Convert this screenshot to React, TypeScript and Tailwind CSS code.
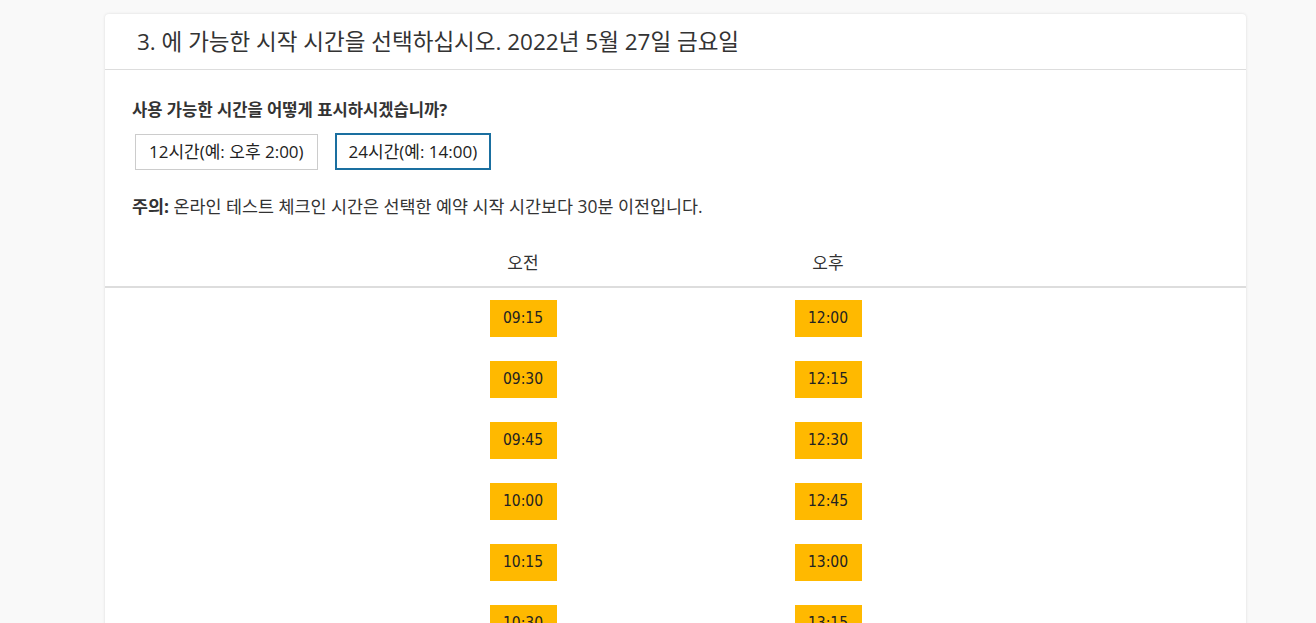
const am = ["09:15", "09:30", "09:45", "10:00", "10:15", "10:30"];
const pm = ["12:00", "12:15", "12:30", "12:45", "13:00", "13:15"];

const font = "font-['Segoe_UI','Open_Sans','Noto_Sans_CJK_KR',sans-serif]";

function Slot({ time }: { time: string }) {
  return (
    <div className="flex h-[61px] items-start justify-center pt-[12px]">
      <button className="h-[37px] w-[67px] bg-[#ffb900] font-['DejaVu_Sans_Condensed','Liberation_Sans',sans-serif] text-[15.5px] text-[#222]">
        {time}
      </button>
    </div>
  );
}

export default function App() {
  return (
    <div className={`min-h-screen bg-[#f9f9f9] pt-[14px] text-[#333] ${font}`}>
      <div className="ml-[105px] w-[1141px] overflow-hidden rounded-[4px] bg-white shadow-[0_0_3px_rgba(0,0,0,0.12)]">
        <div className="flex h-[56px] items-center border-b border-[#dddddd] pl-[32px]">
          <h1 className="text-[22.5px] font-normal leading-[28px] text-[#333]">
            3. 에 가능한 시작 시간을 선택하십시오. 2022년 5월 27일 금요일
          </h1>
        </div>

        <div className="px-[27px] pt-[30px] text-[17px]">
          <p className="text-[16.6px] font-bold leading-[20px]">사용 가능한 시간을 어떻게 표시하시겠습니까?</p>
          <div className="mt-[14px] flex gap-[17px] pl-[3px]">
            <button className="h-[36px] border border-[#cccccc] px-[13px] leading-[20px] text-[#222]">
              12시간(예: 오후 2:00)
            </button>
            <button className="-mt-[1px] h-[37px] border-2 border-[#1a6fa0] px-[12px] leading-[20px] text-[#222]">
              24시간(예: 14:00)
            </button>
          </div>
          <p className="mt-[26px] text-[17.4px] leading-[20px]">
            <span className="font-bold">주의:</span> 온라인 테스트 체크인 시간은 선택한 예약 시작 시간보다 30분 이전입니다.
          </p>
        </div>

        <div className="mt-[37px] flex justify-center border-b-2 border-[#dddddd] pb-[13px] text-[17px] leading-[20px]">
          <div className="w-[305px] text-center">오전</div>
          <div className="w-[305px] text-center">오후</div>
        </div>

        <div className="flex justify-center">
          <div className="w-[305px]">
            {am.map((t) => (
              <Slot key={t} time={t} />
            ))}
          </div>
          <div className="w-[305px]">
            {pm.map((t) => (
              <Slot key={t} time={t} />
            ))}
          </div>
        </div>
      </div>
    </div>
  );
}
